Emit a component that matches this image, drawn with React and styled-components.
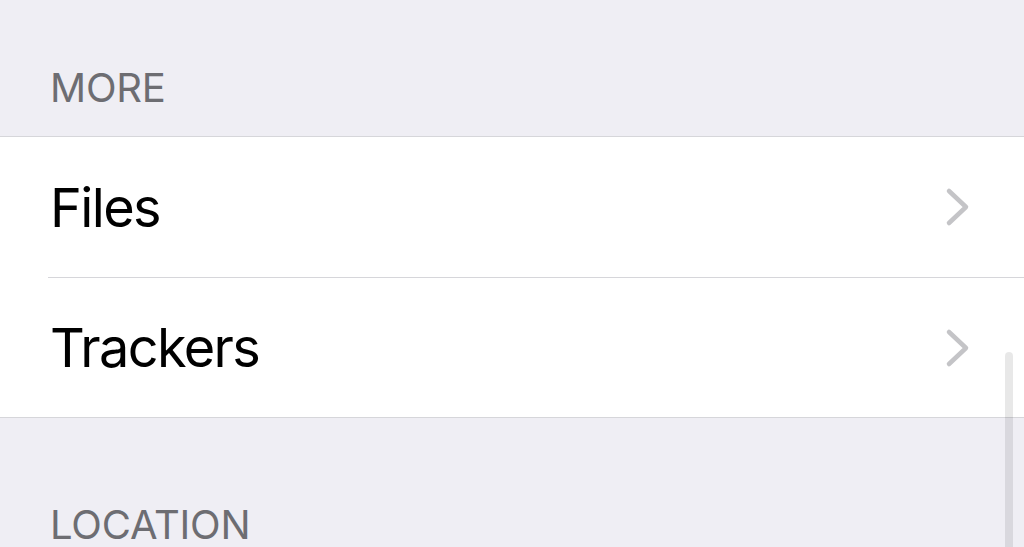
import styled, { createGlobalStyle } from "styled-components";

const Global = createGlobalStyle`
  html, body {
    margin: 0;
    padding: 0;
    background: #efeef4;
    font-family: Inter, "Liberation Sans", sans-serif;
    overflow: hidden;
  }
`;

const Page = styled.div`
  position: relative;
  width: 1024px;
  height: 547px;
  overflow: hidden;
  background: #efeef4;
`;

const SectionHeader = styled.div`
  display: flex;
  align-items: flex-end;
  height: ${({ h }) => h}px;
  padding: 0 0 ${({ pb }) => pb}px 50px;
  box-sizing: border-box;
  font-size: 40px;
  line-height: 1;
  color: #6d6d72;
  letter-spacing: -0.2px;
`;

const List = styled.div`
  background: #fff;
  border-top: 1px solid #d6d6da;
  border-bottom: 1px solid #d6d6da;
`;

const Row = styled.div`
  display: flex;
  align-items: center;
  height: 140px;
  margin-left: 48px;
  padding-left: 2px;
  padding-right: 52px;
  box-sizing: border-box;
  border-top: ${({ first }) => (first ? "none" : "1px solid #d6d6da")};
`;

const Label = styled.span`
  flex: 1;
  font-size: 54px;
  color: #000;
  letter-spacing: -1.6px;
`;

const Chevron = () => (
  <svg width="28" height="40" viewBox="0 0 28 40">
    <path
      d="M5 4 L22 20 L5 36"
      fill="none"
      stroke="#c4c4c7"
      strokeWidth="4.5"
      strokeLinecap="round"
      strokeLinejoin="round"
    />
  </svg>
);

const Scrollbar = styled.div`
  position: absolute;
  left: 1005px;
  top: 352px;
  width: 8px;
  bottom: 0;
  border-radius: 4px 4px 0 0;
  background: rgba(0, 0, 0, 0.09);
`;

export default function App() {
  return (
    <Page>
      <Global />
      <SectionHeader h={136} pb={28}>MORE</SectionHeader>
      <List>
        <Row first>
          <Label>Files</Label>
          <Chevron />
        </Row>
        <Row>
          <Label>Trackers</Label>
          <Chevron />
        </Row>
      </List>
      <SectionHeader h={127} pb={0}>LOCATION</SectionHeader>
      <Scrollbar />
    </Page>
  );
}
